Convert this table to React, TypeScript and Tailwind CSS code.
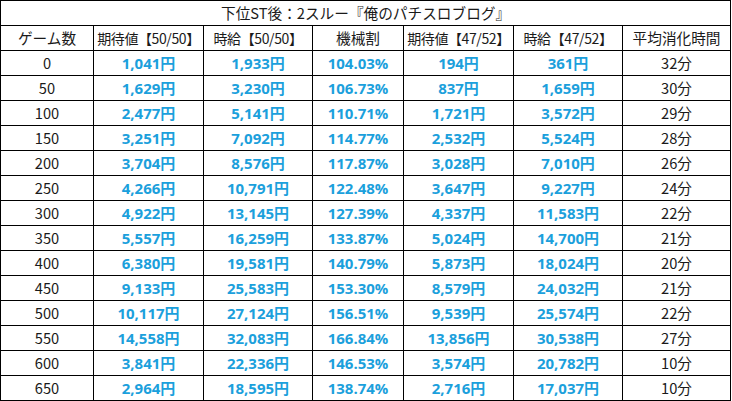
import * as React from "react";

type Row = {
  games: string;
  ev1: string;
  wage1: string;
  rate: string;
  ev2: string;
  wage2: string;
  time: string;
};

const rows: Row[] = [
  { games: "0", ev1: "1,041円", wage1: "1,933円", rate: "104.03%", ev2: "194円", wage2: "361円", time: "32分" },
  { games: "50", ev1: "1,629円", wage1: "3,230円", rate: "106.73%", ev2: "837円", wage2: "1,659円", time: "30分" },
  { games: "100", ev1: "2,477円", wage1: "5,141円", rate: "110.71%", ev2: "1,721円", wage2: "3,572円", time: "29分" },
  { games: "150", ev1: "3,251円", wage1: "7,092円", rate: "114.77%", ev2: "2,532円", wage2: "5,524円", time: "28分" },
  { games: "200", ev1: "3,704円", wage1: "8,576円", rate: "117.87%", ev2: "3,028円", wage2: "7,010円", time: "26分" },
  { games: "250", ev1: "4,266円", wage1: "10,791円", rate: "122.48%", ev2: "3,647円", wage2: "9,227円", time: "24分" },
  { games: "300", ev1: "4,922円", wage1: "13,145円", rate: "127.39%", ev2: "4,337円", wage2: "11,583円", time: "22分" },
  { games: "350", ev1: "5,557円", wage1: "16,259円", rate: "133.87%", ev2: "5,024円", wage2: "14,700円", time: "21分" },
  { games: "400", ev1: "6,380円", wage1: "19,581円", rate: "140.79%", ev2: "5,873円", wage2: "18,024円", time: "20分" },
  { games: "450", ev1: "9,133円", wage1: "25,583円", rate: "153.30%", ev2: "8,579円", wage2: "24,032円", time: "21分" },
  { games: "500", ev1: "10,117円", wage1: "27,124円", rate: "156.51%", ev2: "9,539円", wage2: "25,574円", time: "22分" },
  { games: "550", ev1: "14,558円", wage1: "32,083円", rate: "166.84%", ev2: "13,856円", wage2: "30,538円", time: "27分" },
  { games: "600", ev1: "3,841円", wage1: "22,336円", rate: "146.53%", ev2: "3,574円", wage2: "20,782円", time: "10分" },
  { games: "650", ev1: "2,964円", wage1: "18,595円", rate: "138.74%", ev2: "2,716円", wage2: "17,037円", time: "10分" },
];

const headers = ["ゲーム数", "期待値【50/50】", "時給【50/50】", "機械割", "期待値【47/52】", "時給【47/52】", "平均消化時間"];

// blue, bold figures
const num = "border border-black p-0 text-center leading-none font-bold text-[#1ba0dc] font-['Open_Sans','Noto_Sans_CJK_JP',sans-serif] text-[15px]";
const plain = "border border-black p-0 text-center leading-none";

export default function App() {
  return (
    <div className="min-h-screen bg-white font-['Noto_Sans_CJK_JP','Noto_Sans',sans-serif] text-[14.67px] text-[#1a1a1a]">
      <table className="table-fixed border-collapse w-[730px]">
        <colgroup>
          <col className="w-[93px]" />
          <col className="w-[110px]" />
          <col className="w-[109px]" />
          <col className="w-[91px]" />
          <col className="w-[110px]" />
          <col className="w-[109px]" />
          <col className="w-[108px]" />
        </colgroup>
        <thead>
          <tr className="h-[25px]">
            <th colSpan={7} className={`${plain} font-normal`}>
              下位ST後：2スルー『俺のパチスロブログ』
            </th>
          </tr>
          <tr className="h-[25px]">
            {headers.map((h) => (
              <th
                key={h}
                className={`${plain} font-normal whitespace-nowrap ${h.includes("【") ? "text-[14px] tracking-[-0.4px]" : ""}`}
              >
                {h}
              </th>
            ))}
          </tr>
        </thead>
        <tbody>
          {rows.map((r) => (
            <tr key={r.games} className="h-[25px]">
              <td className={plain}>{r.games}</td>
              <td className={num}>{r.ev1}</td>
              <td className={num}>{r.wage1}</td>
              <td className={num}>{r.rate}</td>
              <td className={num}>{r.ev2}</td>
              <td className={num}>{r.wage2}</td>
              <td className={plain}>{r.time}</td>
            </tr>
          ))}
        </tbody>
      </table>
    </div>
  );
}
